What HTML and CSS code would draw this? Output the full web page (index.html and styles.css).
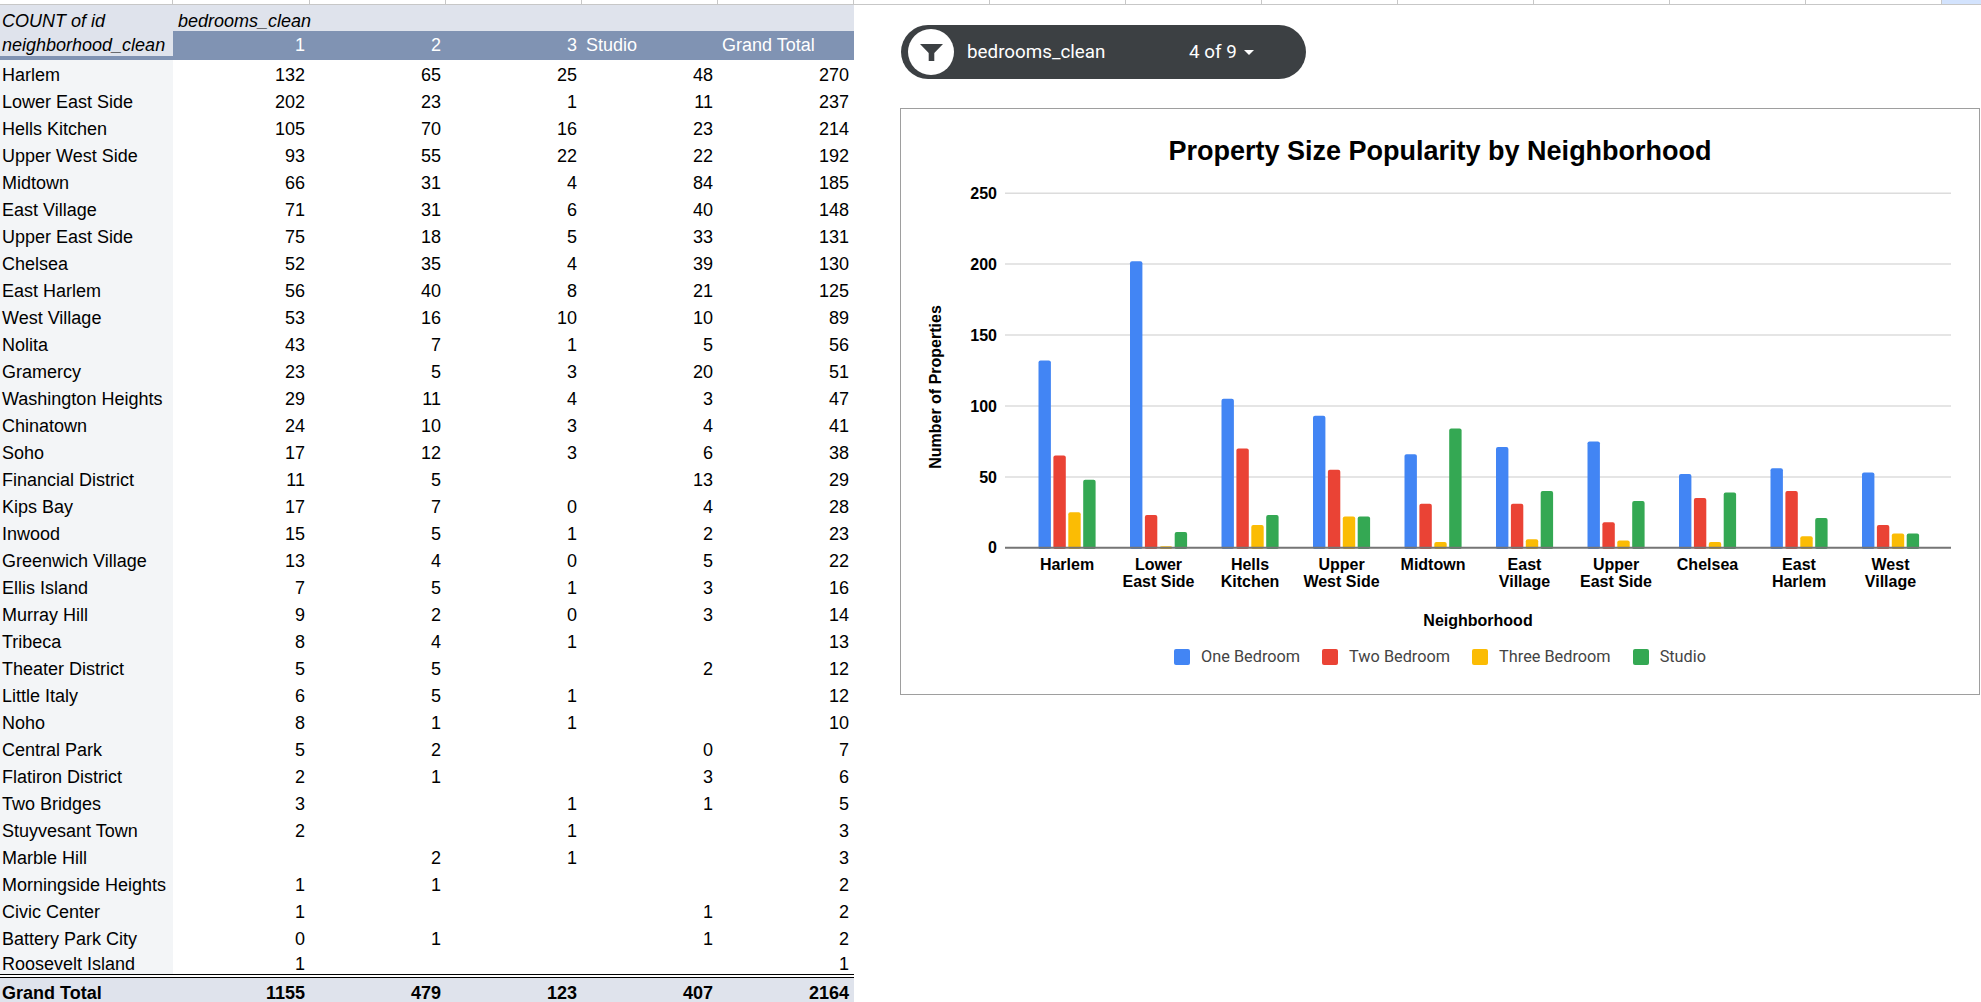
FILE: index.html
```html
<!DOCTYPE html>
<html lang="en">
<head>
    <meta charset="UTF-8">
    <meta name="viewport" content="width=device-width, initial-scale=1.0">
    <title>Property Size Popularity by Neighborhood</title>
    <link rel="stylesheet" href="styles.css">
</head>
<body>

    <div class="col-strip">
        <div></div><div></div><div></div><div></div><div></div>
        <div></div><div></div><div></div><div></div><div></div>
        <div></div><div></div><div></div><div></div><div class="selected"></div>
    </div>

    <div class="sheet">
        <table class="pivot">
            <colgroup>
                <col class="col-label">
                <col class="col-first">
                <col class="col-num">
                <col class="col-num">
                <col class="col-num">
                <col class="col-num">
            </colgroup>
            <thead>
                <tr class="head-top">
                    <th class="label">COUNT of id</th>
                    <th colspan="5" class="pivot-name">bedrooms_clean</th>
                </tr>
                <tr class="head-cols">
                    <th class="label">neighborhood_clean</th>
                    <th>1</th>
                    <th>2</th>
                    <th>3</th>
                    <th class="text-col">Studio</th>
                    <th class="text-col">Grand Total</th>
                </tr>
            </thead>
            <tbody>
                <tr><td>Harlem</td><td>132</td><td>65</td><td>25</td><td>48</td><td>270</td></tr>
                <tr><td>Lower East Side</td><td>202</td><td>23</td><td>1</td><td>11</td><td>237</td></tr>
                <tr><td>Hells Kitchen</td><td>105</td><td>70</td><td>16</td><td>23</td><td>214</td></tr>
                <tr><td>Upper West Side</td><td>93</td><td>55</td><td>22</td><td>22</td><td>192</td></tr>
                <tr><td>Midtown</td><td>66</td><td>31</td><td>4</td><td>84</td><td>185</td></tr>
                <tr><td>East Village</td><td>71</td><td>31</td><td>6</td><td>40</td><td>148</td></tr>
                <tr><td>Upper East Side</td><td>75</td><td>18</td><td>5</td><td>33</td><td>131</td></tr>
                <tr><td>Chelsea</td><td>52</td><td>35</td><td>4</td><td>39</td><td>130</td></tr>
                <tr><td>East Harlem</td><td>56</td><td>40</td><td>8</td><td>21</td><td>125</td></tr>
                <tr><td>West Village</td><td>53</td><td>16</td><td>10</td><td>10</td><td>89</td></tr>
                <tr><td>Nolita</td><td>43</td><td>7</td><td>1</td><td>5</td><td>56</td></tr>
                <tr><td>Gramercy</td><td>23</td><td>5</td><td>3</td><td>20</td><td>51</td></tr>
                <tr><td>Washington Heights</td><td>29</td><td>11</td><td>4</td><td>3</td><td>47</td></tr>
                <tr><td>Chinatown</td><td>24</td><td>10</td><td>3</td><td>4</td><td>41</td></tr>
                <tr><td>Soho</td><td>17</td><td>12</td><td>3</td><td>6</td><td>38</td></tr>
                <tr><td>Financial District</td><td>11</td><td>5</td><td></td><td>13</td><td>29</td></tr>
                <tr><td>Kips Bay</td><td>17</td><td>7</td><td>0</td><td>4</td><td>28</td></tr>
                <tr><td>Inwood</td><td>15</td><td>5</td><td>1</td><td>2</td><td>23</td></tr>
                <tr><td>Greenwich Village</td><td>13</td><td>4</td><td>0</td><td>5</td><td>22</td></tr>
                <tr><td>Ellis Island</td><td>7</td><td>5</td><td>1</td><td>3</td><td>16</td></tr>
                <tr><td>Murray Hill</td><td>9</td><td>2</td><td>0</td><td>3</td><td>14</td></tr>
                <tr><td>Tribeca</td><td>8</td><td>4</td><td>1</td><td></td><td>13</td></tr>
                <tr><td>Theater District</td><td>5</td><td>5</td><td></td><td>2</td><td>12</td></tr>
                <tr><td>Little Italy</td><td>6</td><td>5</td><td>1</td><td></td><td>12</td></tr>
                <tr><td>Noho</td><td>8</td><td>1</td><td>1</td><td></td><td>10</td></tr>
                <tr><td>Central Park</td><td>5</td><td>2</td><td></td><td>0</td><td>7</td></tr>
                <tr><td>Flatiron District</td><td>2</td><td>1</td><td></td><td>3</td><td>6</td></tr>
                <tr><td>Two Bridges</td><td>3</td><td></td><td>1</td><td>1</td><td>5</td></tr>
                <tr><td>Stuyvesant Town</td><td>2</td><td></td><td>1</td><td></td><td>3</td></tr>
                <tr><td>Marble Hill</td><td></td><td>2</td><td>1</td><td></td><td>3</td></tr>
                <tr><td>Morningside Heights</td><td>1</td><td>1</td><td></td><td></td><td>2</td></tr>
                <tr><td>Civic Center</td><td>1</td><td></td><td></td><td>1</td><td>2</td></tr>
                <tr><td>Battery Park City</td><td>0</td><td>1</td><td></td><td>1</td><td>2</td></tr>
                <tr class="short-row"><td>Roosevelt Island</td><td>1</td><td></td><td></td><td></td><td>1</td></tr>
            </tbody>
            <tfoot>
                <tr><td>Grand Total</td><td>1155</td><td>479</td><td>123</td><td>407</td><td>2164</td></tr>
            </tfoot>
        </table>

        <div class="side">
            <div class="filter-pill">
                <span class="filter-icon">
                    <svg width="23" height="17" viewBox="0 0 23 17"><path d="M0 0h23l-8.7 9v8H8.7V9z"/></svg>
                </span>
                <span class="filter-name">bedrooms_clean</span>
                <span class="filter-count">4 of 9</span>
                <span class="caret"></span>
            </div>

            <div class="chart-card">
                <h2 class="chart-title">Property Size Popularity by Neighborhood</h2>

                <svg class="plot" width="1078" height="465" viewBox="901 167 1078 465">
                    <g class="grid">
                        <line x1="1005" x2="1951" y1="193.3" y2="193.3"/>
                        <line x1="1005" x2="1951" y1="264" y2="264"/>
                        <line x1="1005" x2="1951" y1="335" y2="335"/>
                        <line x1="1005" x2="1951" y1="406" y2="406"/>
                        <line x1="1005" x2="1951" y1="477" y2="477"/>
                    </g>

                    <g class="ticks">
                        <text x="997" y="199">250</text>
                        <text x="997" y="269.5">200</text>
                        <text x="997" y="340.5">150</text>
                        <text x="997" y="411.5">100</text>
                        <text x="997" y="482.5">50</text>
                        <text x="997" y="553">0</text>
                    </g>

                    <!-- one unit of height is one property -->
                    <g transform="translate(1038.5 547.7) scale(1 -1.4176)">
                        <rect class="bar one" x="0" y="-1" width="12.4" height="133"/>
                        <rect class="bar two" x="14.9" y="-1" width="12.4" height="66"/>
                        <rect class="bar three" x="29.8" y="-1" width="12.4" height="26"/>
                        <rect class="bar studio" x="44.7" y="-1" width="12.4" height="49"/>
                    </g>
                    <g transform="translate(1130 547.7) scale(1 -1.4176)">
                        <rect class="bar one" x="0" y="-1" width="12.4" height="203"/>
                        <rect class="bar two" x="14.9" y="-1" width="12.4" height="24"/>
                        <rect class="bar three" x="29.8" y="-1" width="12.4" height="2"/>
                        <rect class="bar studio" x="44.7" y="-1" width="12.4" height="12"/>
                    </g>
                    <g transform="translate(1221.5 547.7) scale(1 -1.4176)">
                        <rect class="bar one" x="0" y="-1" width="12.4" height="106"/>
                        <rect class="bar two" x="14.9" y="-1" width="12.4" height="71"/>
                        <rect class="bar three" x="29.8" y="-1" width="12.4" height="17"/>
                        <rect class="bar studio" x="44.7" y="-1" width="12.4" height="24"/>
                    </g>
                    <g transform="translate(1313 547.7) scale(1 -1.4176)">
                        <rect class="bar one" x="0" y="-1" width="12.4" height="94"/>
                        <rect class="bar two" x="14.9" y="-1" width="12.4" height="56"/>
                        <rect class="bar three" x="29.8" y="-1" width="12.4" height="23"/>
                        <rect class="bar studio" x="44.7" y="-1" width="12.4" height="23"/>
                    </g>
                    <g transform="translate(1404.5 547.7) scale(1 -1.4176)">
                        <rect class="bar one" x="0" y="-1" width="12.4" height="67"/>
                        <rect class="bar two" x="14.9" y="-1" width="12.4" height="32"/>
                        <rect class="bar three" x="29.8" y="-1" width="12.4" height="5"/>
                        <rect class="bar studio" x="44.7" y="-1" width="12.4" height="85"/>
                    </g>
                    <g transform="translate(1496 547.7) scale(1 -1.4176)">
                        <rect class="bar one" x="0" y="-1" width="12.4" height="72"/>
                        <rect class="bar two" x="14.9" y="-1" width="12.4" height="32"/>
                        <rect class="bar three" x="29.8" y="-1" width="12.4" height="7"/>
                        <rect class="bar studio" x="44.7" y="-1" width="12.4" height="41"/>
                    </g>
                    <g transform="translate(1587.5 547.7) scale(1 -1.4176)">
                        <rect class="bar one" x="0" y="-1" width="12.4" height="76"/>
                        <rect class="bar two" x="14.9" y="-1" width="12.4" height="19"/>
                        <rect class="bar three" x="29.8" y="-1" width="12.4" height="6"/>
                        <rect class="bar studio" x="44.7" y="-1" width="12.4" height="34"/>
                    </g>
                    <g transform="translate(1679 547.7) scale(1 -1.4176)">
                        <rect class="bar one" x="0" y="-1" width="12.4" height="53"/>
                        <rect class="bar two" x="14.9" y="-1" width="12.4" height="36"/>
                        <rect class="bar three" x="29.8" y="-1" width="12.4" height="5"/>
                        <rect class="bar studio" x="44.7" y="-1" width="12.4" height="40"/>
                    </g>
                    <g transform="translate(1770.5 547.7) scale(1 -1.4176)">
                        <rect class="bar one" x="0" y="-1" width="12.4" height="57"/>
                        <rect class="bar two" x="14.9" y="-1" width="12.4" height="41"/>
                        <rect class="bar three" x="29.8" y="-1" width="12.4" height="9"/>
                        <rect class="bar studio" x="44.7" y="-1" width="12.4" height="22"/>
                    </g>
                    <g transform="translate(1862 547.7) scale(1 -1.4176)">
                        <rect class="bar one" x="0" y="-1" width="12.4" height="54"/>
                        <rect class="bar two" x="14.9" y="-1" width="12.4" height="17"/>
                        <rect class="bar three" x="29.8" y="-1" width="12.4" height="11"/>
                        <rect class="bar studio" x="44.7" y="-1" width="12.4" height="11"/>
                    </g>

                    <line class="baseline" x1="1005" x2="1951" y1="547.7" y2="547.7"/>

                    <g class="cats">
                        <text x="1067" y="569.5">Harlem</text>
                        <text x="1158.5" y="569.5">Lower<tspan x="1158.5" dy="17">East Side</tspan></text>
                        <text x="1250" y="569.5">Hells<tspan x="1250" dy="17">Kitchen</tspan></text>
                        <text x="1341.5" y="569.5">Upper<tspan x="1341.5" dy="17">West Side</tspan></text>
                        <text x="1433" y="569.5">Midtown</text>
                        <text x="1524.5" y="569.5">East<tspan x="1524.5" dy="17">Village</tspan></text>
                        <text x="1616" y="569.5">Upper<tspan x="1616" dy="17">East Side</tspan></text>
                        <text x="1707.5" y="569.5">Chelsea</text>
                        <text x="1799" y="569.5">East<tspan x="1799" dy="17">Harlem</tspan></text>
                        <text x="1890.5" y="569.5">West<tspan x="1890.5" dy="17">Village</tspan></text>
                    </g>

                    <text class="axis-title" x="1478" y="625.7">Neighborhood</text>
                    <text class="axis-title" transform="translate(941 387) rotate(-90)">Number of Properties</text>
                </svg>

                <div class="legend">
                    <span class="legend-item"><i class="swatch one"></i>One Bedroom</span>
                    <span class="legend-item"><i class="swatch two"></i>Two Bedroom</span>
                    <span class="legend-item"><i class="swatch three"></i>Three Bedroom</span>
                    <span class="legend-item"><i class="swatch studio"></i>Studio</span>
                </div>
            </div>
        </div>
    </div>

</body>
</html>
```

FILE: styles.css
```css
html, body {
    height: 100%;
    overflow: hidden;
}

body {
    font-family: "Liberation Sans", Arial, sans-serif;
    margin: 0;
    background-color: #fff;
    color: #000;
}

/* sliver of the sheet's column row left at the top */
.col-strip {
    display: grid;
    grid-template-columns: 173px 137px repeat(12, 136px) 1fr;
    height: 4px;
    border-bottom: 1px solid #c7c7c7;
}

.col-strip div {
    border-right: 1px solid #c7c7c7;
}

.col-strip .selected {
    border-right: 0;
    background-color: #d3e3fd;
}

.sheet {
    display: flex;
    align-items: flex-start;
}

/* pivot table */
.pivot {
    flex: none;
    width: 854px;
    table-layout: fixed;
    border-collapse: separate;
    border-spacing: 0;
    font-size: 18px;
    line-height: 20px;
}

.col-label { width: 173px; }
.col-first { width: 137px; }
.col-num { width: 136px; }

.pivot th,
.pivot td {
    padding: 0 5px 2px 2px;
    font-weight: normal;
    text-align: right;
    vertical-align: bottom;
    white-space: nowrap;
}

.pivot th.label,
.pivot td:first-child {
    text-align: left;
}

.head-top th {
    height: 26px;
    box-sizing: border-box;
    padding-bottom: 0;
    background-color: #dfe3ec;
    font-style: italic;
}

.pivot .pivot-name {
    padding-left: 5px;
    text-align: left;
}

.head-cols th {
    height: 29px;
    box-sizing: border-box;
    padding-bottom: 1px;
    background-color: #8093b3;
    background-clip: padding-box;
    border-bottom: 4px solid #8093b3;
    color: #fff;
}

.head-cols th.label {
    background-color: #dfe3ec;
    color: #000;
    font-style: italic;
}

.pivot .text-col {
    padding-left: 4px;
    text-align: left;
}

.pivot tbody td {
    height: 27px;
    box-sizing: border-box;
}

.pivot tbody td:first-child {
    background-color: #f3f5f7;
}

.pivot tbody .short-row td {
    height: 23px;
    padding-bottom: 0;
}

.pivot tfoot td {
    height: 31px;
    box-sizing: border-box;
    border-top: 4px double #000;
    background-color: #dfe3ec;
    background-clip: padding-box;
    font-weight: bold;
}

/* filter pill and chart */
.side {
    margin-left: 46px;
}

.filter-pill {
    display: flex;
    align-items: center;
    width: 405px;
    height: 54px;
    margin: 20px 0 0 1px;
    border-radius: 27px;
    background-color: #3c4043;
    color: #fff;
    font-family: Roboto, sans-serif;
    font-size: 18.8px;
}

.filter-icon {
    display: flex;
    align-items: center;
    justify-content: center;
    width: 46px;
    height: 46px;
    margin-left: 7px;
    border-radius: 50%;
    background-color: #fff;
}

.filter-icon svg {
    fill: #3c4043;
}

.filter-name {
    width: 222px;
    margin-left: 13px;
}

.caret {
    width: 0;
    height: 0;
    margin-left: 7px;
    border-left: 5px solid transparent;
    border-right: 5px solid transparent;
    border-top: 5px solid #fff;
}

.chart-card {
    width: 1078px;
    height: 585px;
    margin-top: 29px;
    border: 1px solid #9e9e9e;
}

.chart-title {
    margin: 26px 0 0;
    font-size: 27px;
    line-height: 32px;
    font-weight: bold;
    text-align: center;
}

.plot {
    display: block;
}

.grid line {
    stroke: #dcdcdc;
    stroke-width: 1.5;
}

.baseline {
    stroke: #757575;
    stroke-width: 2;
}

.plot text {
    font-family: "Liberation Sans", Arial, sans-serif;
    font-weight: bold;
    fill: #000;
}

.ticks text {
    font-size: 16px;
    text-anchor: end;
}

.cats text,
.axis-title {
    font-size: 16px;
    text-anchor: middle;
}

.bar {
    rx: 2px;
    ry: 1.4px;
}

.bar.one { fill: #4285f4; }
.bar.two { fill: #ea4335; }
.bar.three { fill: #fbbc04; }
.bar.studio { fill: #34a853; }

.legend {
    display: flex;
    justify-content: center;
    gap: 22px;
    margin-top: 15px;
    font-family: Roboto, sans-serif;
    font-size: 16.3px;
    line-height: 20px;
    color: #444;
}

.legend-item {
    display: flex;
    align-items: center;
}

.swatch {
    width: 16px;
    height: 16px;
    margin-right: 11px;
    border-radius: 2px;
}

.swatch.one { background-color: #4285f4; }
.swatch.two { background-color: #ea4335; }
.swatch.three { background-color: #fbbc04; }
.swatch.studio { background-color: #34a853; }
```
